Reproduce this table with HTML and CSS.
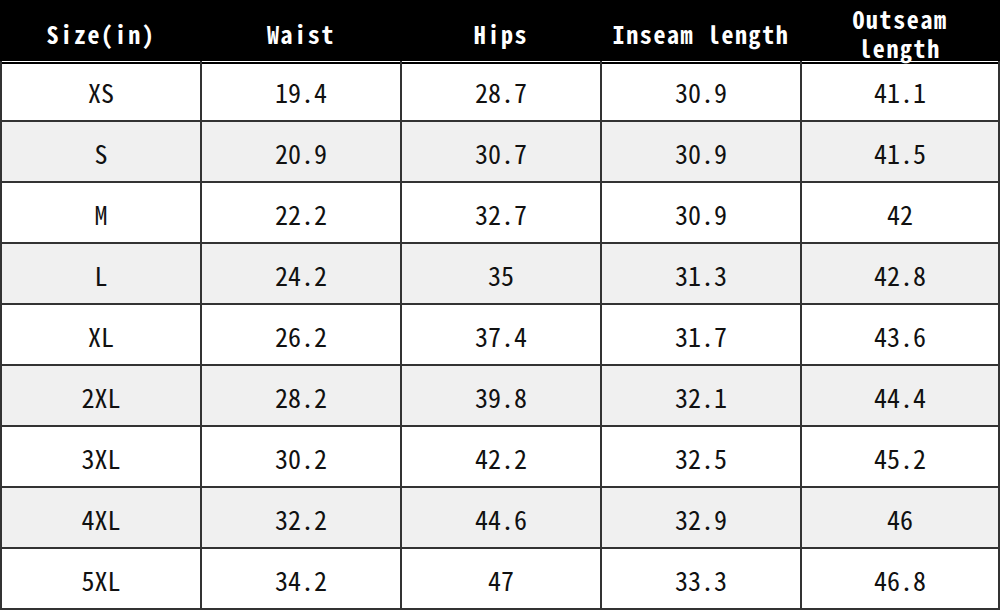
FILE: index.html
```html
<!DOCTYPE html>
<html>
<head>
<meta charset="utf-8">
<link rel="stylesheet" href="styles.css">
</head>
<body>
<div class="size-table">
  <div class="row head">
    <div class="cell">Size(in)</div>
    <div class="cell">Waist</div>
    <div class="cell">Hips</div>
    <div class="cell">Inseam length</div>
    <div class="cell">Outseam<br>length</div>
  </div>
  <div class="row"><div class="cell">XS</div><div class="cell">19.4</div><div class="cell">28.7</div><div class="cell">30.9</div><div class="cell">41.1</div></div>
  <div class="row alt"><div class="cell">S</div><div class="cell">20.9</div><div class="cell">30.7</div><div class="cell">30.9</div><div class="cell">41.5</div></div>
  <div class="row"><div class="cell">M</div><div class="cell">22.2</div><div class="cell">32.7</div><div class="cell">30.9</div><div class="cell">42</div></div>
  <div class="row alt"><div class="cell">L</div><div class="cell">24.2</div><div class="cell">35</div><div class="cell">31.3</div><div class="cell">42.8</div></div>
  <div class="row"><div class="cell">XL</div><div class="cell">26.2</div><div class="cell">37.4</div><div class="cell">31.7</div><div class="cell">43.6</div></div>
  <div class="row alt"><div class="cell">2XL</div><div class="cell">28.2</div><div class="cell">39.8</div><div class="cell">32.1</div><div class="cell">44.4</div></div>
  <div class="row"><div class="cell">3XL</div><div class="cell">30.2</div><div class="cell">42.2</div><div class="cell">32.5</div><div class="cell">45.2</div></div>
  <div class="row alt"><div class="cell">4XL</div><div class="cell">32.2</div><div class="cell">44.6</div><div class="cell">32.9</div><div class="cell">46</div></div>
  <div class="row"><div class="cell">5XL</div><div class="cell">34.2</div><div class="cell">47</div><div class="cell">33.3</div><div class="cell">46.8</div></div>
</div>
</body>
</html>
```

FILE: styles.css
```css
html, body {
  margin: 0;
  padding: 0;
  background: #ffffff;
}

.size-table {
  width: 1000px;
  height: 610px;
  display: grid;
  grid-template-rows: repeat(10, 61px);
  font-family: "Noto Sans Mono CJK SC", "DejaVu Sans Mono", monospace;
  color: #111111;
}

.row {
  display: grid;
  grid-template-columns: repeat(5, 200px);
}

.cell {
  display: flex;
  align-items: center;
  justify-content: center;
  text-align: center;
  box-sizing: border-box;
  font-size: 26px;
  padding-top: 2px;
  border-left: 2px solid #333333;
  border-bottom: 2px solid #333333;
}

.cell:last-child {
  border-right: 2px solid #333333;
}

.row.alt {
  background: #f0f0f0;
}

.row.head {
  background: #000000;
}

.row.head .cell {
  color: #ffffff;
  font-weight: bold;
  font-size: 24px;
  letter-spacing: 1.6px;
  line-height: 29px;
  border-color: #000000;
  padding-top: 4px;
}
```
